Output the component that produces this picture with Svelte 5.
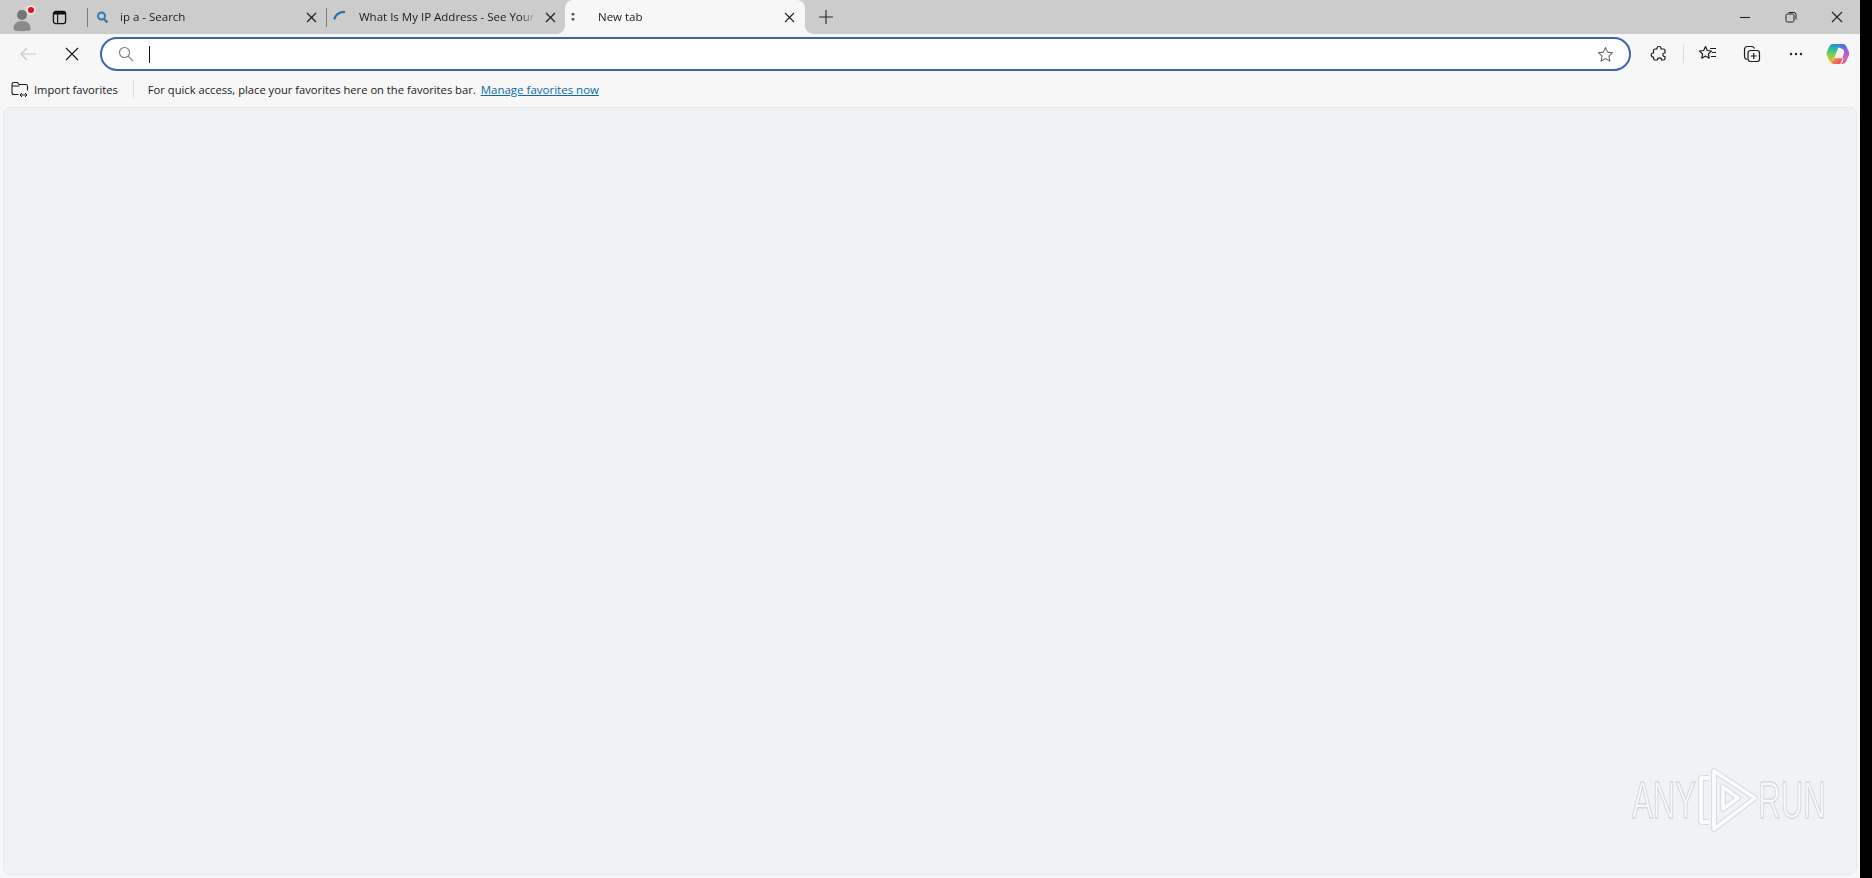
<script>
  const tabs = [
    { title: 'ip a - Search', icon: 'search' },
    { title: 'What Is My IP Address - See Your', icon: 'spin' }
  ];
</script>

<div class="window">
  <header class="strip">
    <div class="left">
      <div class="avatar">
        <svg width="30" height="30" viewBox="0 0 30 30">
          <circle cx="14" cy="13" r="5" fill="#757575" />
          <path d="M5.500 28c-.5-6 3-9 8.500-9s9 3 8.500 9c-2 1.500-15 1.500-17 0z" fill="#8a8a8a" />
          <circle cx="23" cy="8" r="5" fill="#e4e4e4" />
          <circle cx="23" cy="8" r="3" fill="#e3101f" />
        </svg>
      </div>
      <div class="vtabs">
        <svg width="15" height="15" viewBox="0 0 16 16">
          <rect x="1.500" y="1.500" width="13" height="13" rx="2.500" fill="none" stroke="#111" stroke-width="1.400" />
          <path d="M2 2h12v2.800H2z" fill="#111" />
          <path d="M6 4v10" stroke="#111" stroke-width="1.200" />
        </svg>
      </div>
    </div>

    {#each tabs as tab}
      <div class="tab">
        <span class="fav">
          {#if tab.icon === 'search'}
            <svg width="13" height="13" viewBox="0 0 13 13">
              <circle cx="5.500" cy="5" r="3.500" fill="none" stroke="#2f79b5" stroke-width="2" />
              <path d="M8 8l3.500 3.500" stroke="#2f79b5" stroke-width="2.200" />
            </svg>
          {:else}
            <svg class="spin" width="14" height="14" viewBox="0 0 14 14">
              <path d="M1.500 8.500C2.500 5 6 2.200 11 1.800" fill="none" stroke="#2a6db0" stroke-width="2.300" stroke-linecap="round" />
            </svg>
          {/if}
        </span>
        <span class="title">{tab.title}</span>
        <span class="close">
          <svg width="11" height="11" viewBox="0 0 11 11"><path d="M1 1l9 9M10 1l-9 9" stroke="#222" stroke-width="1.300" /></svg>
        </span>
      </div>
    {/each}

    <div class="tab active">
      <span class="dots">
        <svg width="4" height="10" viewBox="0 0 4 10"><rect x="0.500" y="1" width="3" height="2.500" rx="1" fill="#555" /><rect x="0.500" y="6" width="3" height="2.500" rx="1" fill="#555" /></svg>
      </span>
      <span class="title">New tab</span>
      <span class="close">
        <svg width="11" height="11" viewBox="0 0 11 11"><path d="M1 1l9 9M10 1l-9 9" stroke="#222" stroke-width="1.100" /></svg>
      </span>
    </div>

    <div class="plus">
      <svg width="16" height="16" viewBox="0 0 16 16"><path d="M8 1v14M1 8h14" stroke="#222" stroke-width="1.100" /></svg>
    </div>

    <div class="winctl">
      <span><svg width="12" height="12" viewBox="0 0 12 12"><path d="M1 6.500h10" stroke="#222" stroke-width="1.100" /></svg></span>
      <span><svg width="12" height="12" viewBox="0 0 12 12"><rect x="1" y="3" width="8" height="8" rx="1.500" fill="none" stroke="#222" /><path d="M3.500 1.500h5.500a2 2 0 0 1 2 2v5" fill="none" stroke="#222" /></svg></span>
      <span><svg width="12" height="12" viewBox="0 0 12 12"><path d="M1 1l10 10M11 1L1 11" stroke="#222" stroke-width="1.100" /></svg></span>
    </div>
  </header>

  <div class="toolbar">
    <button class="nav back" aria-label="Back">
      <svg width="18" height="16" viewBox="0 0 18 16"><path d="M17 8H2M8 2L2 8l6 6" fill="none" stroke="#c9c9c9" stroke-width="1.200" /></svg>
    </button>
    <button class="nav stop" aria-label="Stop">
      <svg width="14" height="14" viewBox="0 0 14 14"><path d="M1 1l12 12M13 1L1 13" stroke="#1c1c1c" stroke-width="1.200" /></svg>
    </button>
    <div class="address">
      <svg class="mag" width="16" height="16" viewBox="0 0 16 16">
        <circle cx="6.500" cy="6.500" r="5" fill="none" stroke="#777" stroke-width="1.100" />
        <path d="M10 10l5 5" stroke="#888" stroke-width="1.200" />
      </svg>
      <span class="caret"></span>
      <svg class="star" width="17" height="17" viewBox="0 0 20 20">
        <path d="M10 1.800l2.500 5.400 5.900.7-4.400 4 1.200 5.800-5.200-2.900-5.200 2.900 1.200-5.800-4.400-4 5.900-.7z" fill="none" stroke="#666" stroke-width="1.200" stroke-linejoin="round" />
      </svg>
    </div>
    <div class="tools">
      <span class="tool">
        <svg width="18" height="18" viewBox="0 0 18 18">
          <path d="M7 3c0-2 4-2 4 0v1h2.500c.8 0 1.500.7 1.500 1.500V8h-.5c-2.300 0-2.300 3.500 0 3.500h.5v2c0 .8-.7 1.500-1.500 1.500H11.500v-.5c0-2.300-4-2.300-4 0v.5H5c-.8 0-1.500-.7-1.500-1.500V12H3c-2.300 0-2.300-4 0-4h.5V5.500C3.500 4.700 4.200 4 5 4h2z" fill="none" stroke="#1c1c1c" stroke-width="1.200" stroke-linejoin="round" />
        </svg>
      </span>
      <span class="bar"></span>
      <span class="tool spaced">
        <svg width="20" height="18" viewBox="0 0 20 18">
          <path d="M7.500 1.500l1.800 4 4.200.5-3.100 2.900.8 4.300-3.700-2.100-3.700 2.100.8-4.300L1.500 6l4.200-.5z" fill="none" stroke="#1c1c1c" stroke-width="1.200" stroke-linejoin="round" />
          <path d="M12 3.500h6M14 7.500h4M13 11.500h5" stroke="#1c1c1c" stroke-width="1.200" />
        </svg>
      </span>
      <span class="tool spaced">
        <svg width="18" height="18" viewBox="0 0 18 18">
          <path d="M4 14.500c-1.500-.5-2.500-1.500-2.500-3V4.500c0-2 1.500-3 3-3h4c1.500 0 2.500.8 3 2" fill="none" stroke="#1c1c1c" stroke-width="1.200" />
          <rect x="5" y="5.500" width="11.500" height="11" rx="2.500" fill="none" stroke="#1c1c1c" stroke-width="1.200" />
          <path d="M10.700 8v6M7.700 11h6" stroke="#1c1c1c" stroke-width="1.200" />
        </svg>
      </span>
      <span class="tool">
        <svg width="14" height="4" viewBox="0 0 14 4"><circle cx="2" cy="2" r="1.200" fill="#222" /><circle cx="7" cy="2" r="1.200" fill="#222" /><circle cx="12" cy="2" r="1.200" fill="#222" /></svg>
      </span>
      <span class="copilot">
        <svg width="24" height="22" viewBox="0 0 24 22">
          <defs>
            <linearGradient id="cpA" x1="0.400" y1="0" x2="0.300" y2="1"><stop offset="0" stop-color="#1f8fe0" /><stop offset="0.350" stop-color="#35c48a" /><stop offset="0.650" stop-color="#8fd040" /><stop offset="1" stop-color="#f6b72a" /></linearGradient>
            <linearGradient id="cpB" x1="0.500" y1="0" x2="0.500" y2="1"><stop offset="0" stop-color="#3d6fe8" /><stop offset="0.450" stop-color="#a45fe0" /><stop offset="1" stop-color="#ee5f9a" /></linearGradient>
            <linearGradient id="cpC" x1="0" y1="0" x2="1" y2="0.400"><stop offset="0" stop-color="#f6a32a" /><stop offset="1" stop-color="#ec4f6a" /></linearGradient>
          </defs>
          <path d="M7 1h7.500c1 0 .9 1.200.2 1.700-1.600 1.100-2.500 2.300-3.200 4L8.300 15c-.8 2-1.900 3.500-4 3.500-.6-.2-1-.7-1.300-1.300L1 12.500c-.6-1.300-.6-2.700 0-4L3.500 3.300C4.200 1.800 5.400 1 7 1z" fill="url(#cpA)" />
          <path d="M14.500 1h2.500c1.400 0 2.500.8 3.100 2.100l2.700 5.400c.6 1.300.6 2.700 0 4L21 16.500c-.7 1.300-2 1.500-2.800.7l-1.600-2.700 1.500-5c.3-1.200-.2-2.400-1.200-3.200L13 4.500c.2-1.500.5-2.800 1.500-3.500z" fill="url(#cpB)" />
          <path d="M4.500 18.500c2.300 0 3.500-1.500 4.200-3.300h8l-2.200 5.200c-.3.500-.8.600-1.300.6H8c-1.600 0-2.800-1-3.500-2.500z" fill="url(#cpC)" />
          <path d="M14 21c1.500-.2 2.200-1.400 2.700-2.600l1.200-2.800c.8 1.300 2 1.700 3.100.9l-1.200 2.300c-.7 1.400-2 2.200-3.400 2.200z" fill="#e8578c" />
          <path d="M12.500 7h3.500l-2.800 8H9.600z" fill="#fbeee2" />
        </svg>
      </span>
    </div>
  </div>

  <div class="favbar">
    <span class="import">
      <svg width="18" height="17" viewBox="0 0 18 17">
        <path d="M7.500 13.500H3c-1 0-2-.8-2-2V3.200C1 2 2 1.500 3 1.500h3.500l1.500 2h7c1 0 1.500 1 1.500 2v4" fill="none" stroke="#1c1c1c" stroke-width="1.100" />
        <path d="M1 5h7.500" stroke="#1c1c1c" stroke-width="1" />
        <path d="M9 14h7M11 12l-2 2 2 2M14 12l2 2-2 2" fill="none" stroke="#1c1c1c" stroke-width="1" />
      </svg>
      Import favorites
    </span>
    <span class="bar"></span>
    <span class="hint">For quick access, place your favorites here on the favorites bar.</span>
    <a class="link" href="#favorites">Manage favorites now</a>
  </div>

  <main class="content">
    <div class="mark" aria-label="ANY RUN">
      <span class="word">ANY</span>
      <svg width="60" height="64" viewBox="0 0 60 64">
        <g fill="none" stroke="#d3d7d9" stroke-width="5.500" stroke-linejoin="round">
          <path d="M11 10H3v44h8" />
          <path d="M16 3l41 27-41 31z" />
          <path d="M25 19l15 11-15 11z" />
        </g>
        <g fill="none" stroke="#fafbfb" stroke-width="3.800" stroke-linejoin="round">
          <path d="M11 10H3v44h8" />
          <path d="M16 3l41 27-41 31z" />
          <path d="M25 19l15 11-15 11z" />
        </g>
      </svg>
      <span class="word">RUN</span>
    </div>
  </main>
</div>

<style>
  :global(body) {
    margin: 0;
    background: #000;
  }
  .window {
    width: 1860px;
    height: 878px;
    background: #f7f7f7;
    display: flex;
    flex-direction: column;
    font-family: "Open Sans", "Noto Sans", sans-serif;
    font-size: 11.5px;
    color: #1a1a1a;
    overflow: hidden;
  }
  .strip {
    height: 34px;
    flex: none;
    background: #cccccc;
    display: flex;
    align-items: center;
  }
  .left {
    width: 87px;
    flex: none;
    display: flex;
    align-items: center;
  }
  .avatar {
    width: 30px;
    height: 30px;
    margin-left: 8px;
  }
  .vtabs {
    margin-left: 14px;
    display: flex;
  }
  .tab {
    width: 239px;
    height: 34px;
    flex: none;
    box-sizing: border-box;
    display: flex;
    align-items: center;
    position: relative;
  }
  .tab::before {
    content: "";
    position: absolute;
    left: 0;
    top: 8px;
    height: 19px;
    width: 1px;
    background: #7d7d7d;
  }
  .fav {
    width: 33px;
    padding-left: 9px;
    box-sizing: border-box;
    flex: none;
    display: flex;
  }
  .spin {
    margin-left: -2px;
  }
  .title {
    flex: 1;
    white-space: nowrap;
    overflow: hidden;
    margin: 0 6px 2px 0;
    -webkit-mask-image: linear-gradient(to right, #000 92%, transparent 100%);
    mask-image: linear-gradient(to right, #000 92%, transparent 100%);
  }
  .close {
    width: 24px;
    flex: none;
    display: flex;
    padding-left: 4px;
    box-sizing: border-box;
  }
  .tab.active {
    width: 240px;
    background: #f7f7f7;
    border-radius: 8px 8px 0 0;
  }
  .tab.active::before,
  .tab.active::after {
    content: "";
    position: absolute;
    top: 26px;
    left: auto;
    height: 8px;
    width: 8px;
    background: radial-gradient(circle at 0 0, transparent 7.500px, #f7f7f7 8px);
  }
  .tab.active::before {
    left: -8px;
  }
  .tab.active::after {
    right: -8px;
    background: radial-gradient(circle at 100% 0, transparent 7.500px, #f7f7f7 8px);
  }
  .dots {
    width: 33px;
    padding-left: 6px;
    box-sizing: border-box;
    flex: none;
    display: flex;
  }
  .tab.active .close {
    padding-left: 2px;
    width: 23px;
  }
  .plus {
    margin-left: 13px;
    display: flex;
  }
  .winctl {
    margin-left: auto;
    display: flex;
  }
  .winctl span {
    width: 46px;
    display: flex;
    justify-content: center;
  }
  .toolbar {
    height: 38px;
    flex: none;
    box-sizing: border-box;
    display: flex;
    align-items: center;
    padding-top: 2px;
  }
  .nav {
    border: 0;
    padding: 0;
    background: none;
    display: flex;
    justify-content: center;
    flex: none;
  }
  .back {
    width: 43px;
    margin-left: 6px;
  }
  .stop {
    width: 43px;
    margin: 0 7px 0 1px;
  }
  .address {
    width: 1531px;
    height: 34px;
    box-sizing: border-box;
    flex: none;
    background: #fff;
    border: 2px solid #3d64b2;
    border-radius: 17px;
    display: flex;
    align-items: center;
    padding: 0 15px 0 16px;
  }
  .caret {
    width: 1px;
    height: 17px;
    background: #111;
    margin-left: 15px;
  }
  .star {
    margin-left: auto;
  }
  .tools {
    flex: 1;
    display: flex;
    align-items: center;
    padding-left: 10px;
  }
  .tool {
    width: 36px;
    display: flex;
    justify-content: center;
    flex: none;
  }
  .spaced {
    margin-right: 8px;
  }
  .tools .bar {
    margin: 0 6px;
  }
  .copilot {
    width: 48px;
    display: flex;
    justify-content: center;
    flex: none;
  }
  .bar {
    width: 1px;
    height: 18px;
    background: #dcdcdc;
    flex: none;
  }
  .favbar {
    height: 34px;
    flex: none;
    display: flex;
    align-items: center;
    font-size: 11.2px;
  }
  .import {
    display: flex;
    align-items: center;
    gap: 5px;
    margin-left: 11px;
  }
  .favbar .bar {
    margin: 0 14px 0 15px;
  }
  .link {
    margin-left: 5px;
    font-size: 11.5px;
    color: #0a6aa8;
    text-decoration: underline;
  }
  .content {
    flex: 1;
    margin: 1px 3px 3px 3px;
    background: #f0f3f6;
    border: 1px solid #e8e9ea;
    border-radius: 8px;
    position: relative;
  }
  .mark {
    position: absolute;
    right: 32px;
    top: 660px;
    display: flex;
    align-items: center;
    gap: 2px;
  }
  .word {
    font-family: "Liberation Sans", sans-serif;
    font-size: 52px;
    line-height: 52px;
    color: #f8f9fa;
    -webkit-text-stroke: 1.400px #d3d7d9;
    transform: scaleX(0.6);
    width: 64px;
    display: flex;
    justify-content: center;
    white-space: nowrap;
  }
</style>
